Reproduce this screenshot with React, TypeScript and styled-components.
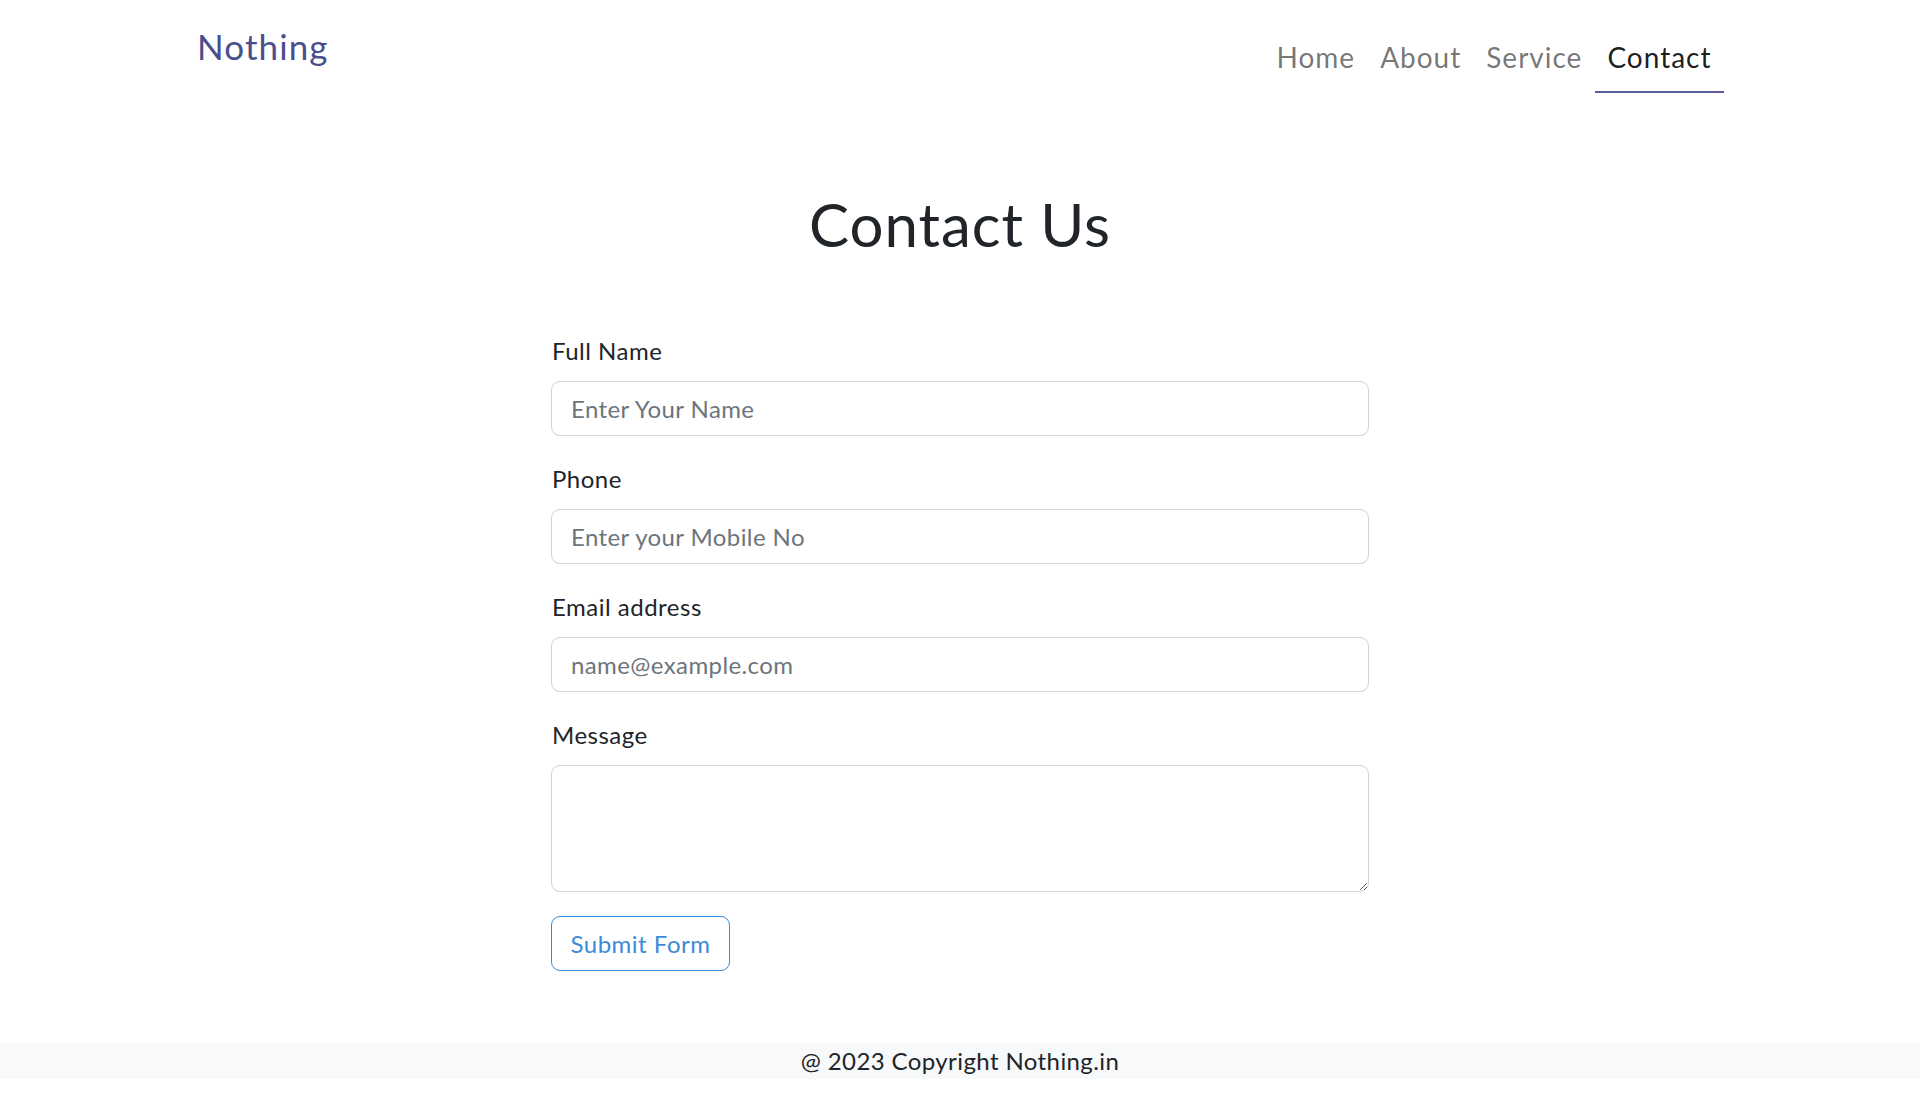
import React from "react";
import styled, { createGlobalStyle } from "styled-components";

const GlobalStyle = createGlobalStyle`
  * { box-sizing: border-box; }
  html, body { margin: 0; padding: 0; background: #ffffff; }
  body {
    font-family: Lato, "Noto Sans", "Liberation Sans", sans-serif;
    color: #212529;
    -webkit-font-smoothing: antialiased;
  }
`;

const Page = styled.div`
  width: 1920px;
  min-height: 1105px;
  display: flex;
  flex-direction: column;
`;

const NavBar = styled.nav`
  display: flex;
  justify-content: space-between;
  align-items: flex-start;
  padding: 0 196px 0 197px;
`;

const Brand = styled.a`
  margin-top: 22px;
  font-size: 35px;
  line-height: 48px;
  color: #4b4e8c;
  text-decoration: none;
  letter-spacing: 1.1px;
`;

const NavList = styled.ul`
  display: flex;
  list-style: none;
  margin: 0;
  padding: 0;
`;

const NavLink = styled.a<{ $active?: boolean }>`
  display: block;
  padding: 36px 12.5px 13px;
  font-size: 28px;
  line-height: 42px;
  letter-spacing: 1px;
  text-decoration: none;
  color: ${(p) => (p.$active ? "rgba(0,0,0,0.9)" : "rgba(0,0,0,0.55)")};
  border-bottom: 2px solid ${(p) => (p.$active ? "#5b5b9b" : "transparent")};
`;

const Main = styled.main`
  display: flex;
  flex-direction: column;
  align-items: center;
`;

const Title = styled.h1`
  margin: 95px 0 73px;
  font-size: 60px;
  line-height: 72px;
  font-weight: 400;
  letter-spacing: 1px;
  color: #212529;
`;

const Form = styled.form`
  width: 818px;
  display: flex;
  flex-direction: column;
`;

const Field = styled.div`
  display: flex;
  flex-direction: column;
  margin-bottom: 25px;
`;

const Label = styled.label`
  font-size: 24px;
  line-height: 36px;
  letter-spacing: 0.5px;
  margin-bottom: 12px;
  padding-left: 1px;
  color: #212529;
`;

const Input = styled.input`
  height: 55px;
  width: 100%;
  padding: 0 19px;
  font-family: inherit;
  font-size: 24px;
  letter-spacing: 0.4px;
  color: #212529;
  border: 1px solid #ced4da;
  border-radius: 9px;
  background: #ffffff;
  outline: none;
  &::placeholder {
    color: #6c757d;
  }
`;

const TextArea = styled.textarea`
  display: block;
  height: 127px;
  width: 100%;
  padding: 9px 19px;
  font-family: inherit;
  font-size: 24px;
  line-height: 36px;
  color: #212529;
  border: 1px solid #ced4da;
  border-radius: 9px;
  background: #ffffff;
  outline: none;
  resize: vertical;
`;

const SubmitButton = styled.button`
  align-self: flex-start;
  margin-top: -1px;
  height: 55px;
  width: 179px;
  padding: 0;
  font-family: inherit;
  font-size: 24px;
  letter-spacing: 0.5px;
  color: #3b8ad8;
  background: #ffffff;
  border: 1px solid #3b8ad8;
  border-radius: 9px;
  cursor: pointer;
`;

const Footer = styled.footer`
  margin-top: 72px;
  height: 36px;
  background: #f8f9fa;
  text-align: center;
  font-size: 24px;
  line-height: 36px;
  letter-spacing: 0.4px;
  color: #212529;
`;

const links = ["Home", "About", "Service", "Contact"];

export default function App() {
  return (
    <>
      <GlobalStyle />
      <Page>
        <NavBar>
          <Brand href="#">Nothing</Brand>
          <NavList>
            {links.map((l) => (
              <li key={l}>
                <NavLink href="#" $active={l === "Contact"}>
                  {l}
                </NavLink>
              </li>
            ))}
          </NavList>
        </NavBar>
        <Main>
          <Title>Contact Us</Title>
          <Form onSubmit={(e) => e.preventDefault()}>
            <Field>
              <Label htmlFor="name">Full Name</Label>
              <Input id="name" type="text" placeholder="Enter Your Name" />
            </Field>
            <Field>
              <Label htmlFor="phone">Phone</Label>
              <Input id="phone" type="text" placeholder="Enter your Mobile No" />
            </Field>
            <Field>
              <Label htmlFor="email">Email address</Label>
              <Input id="email" type="email" placeholder="name@example.com" />
            </Field>
            <Field>
              <Label htmlFor="msg">Message</Label>
              <TextArea id="msg" />
            </Field>
            <SubmitButton type="submit">Submit Form</SubmitButton>
          </Form>
        </Main>
        <Footer>@ 2023 Copyright Nothing.in</Footer>
      </Page>
    </>
  );
}
